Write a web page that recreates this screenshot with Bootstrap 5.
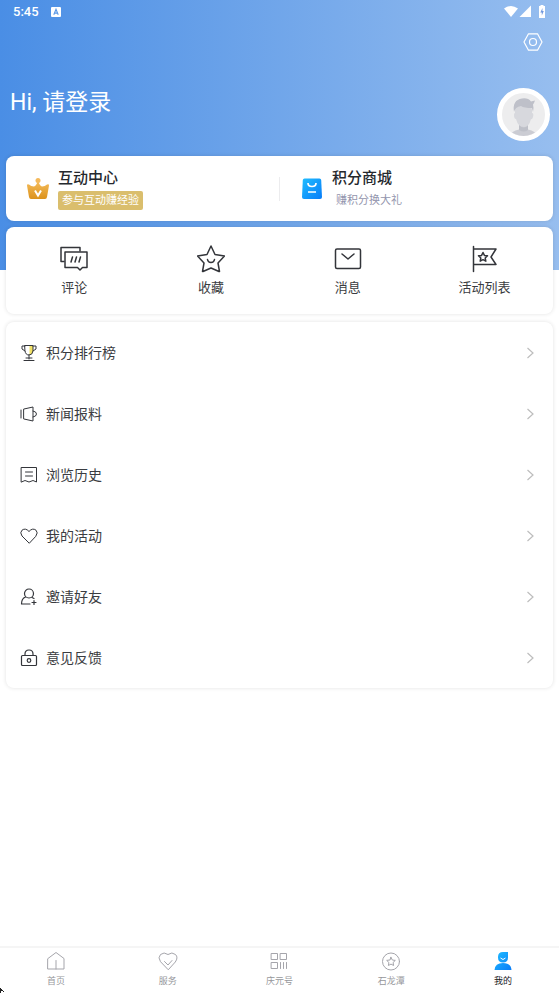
<!DOCTYPE html>
<html lang="zh-CN">
<head>
<meta charset="utf-8">
<meta name="viewport" content="width=device-width, initial-scale=1">
<title>我的</title>
<link href="https://cdn.jsdelivr.net/npm/bootstrap@5.3.0/dist/css/bootstrap.min.css" rel="stylesheet">
<style>
body { font-family: Roboto, "Noto Sans CJK SC", sans-serif; color: #3a3c41; background: #fff; }
svg { display: block; flex: none; }
a { color: inherit; text-decoration: none; }
.screen { background: linear-gradient(90deg, #4a8ee5, #97beef) 0 0 / 100% 270px no-repeat; }
.status { height: 24px; padding: 0 13px; font-size: 13px; font-weight: 500; line-height: 24px; }
.settings-row { height: 36px; padding-right: 16px; }
.profile { height: 96px; padding: 28px 9px 0 10px; }
.greeting { font-size: 23px; line-height: 30px; }
.avatar { width: 53px; height: 53px; border: 5px solid #fff; background: #ededee; overflow: hidden; }
.content { padding: 0 6px; }
.panel { border-radius: 8px; background: #fff; box-shadow: 0 0 4px rgba(0, 0, 0, .12); }
.promo { height: 65px; }
.promo a { padding-left: 20px; gap: 8px; }
.promo-text { gap: 2px; }
.promo-title { font-size: 15px; line-height: 22px; font-weight: 500; color: #25282d; }
.promo-note { font-size: 11px; line-height: 19px; padding: 0 4px; border-radius: 2px; color: #9395ad; }
.promo-note.gold { background: #dabe6d; color: #fff; }
.rule { width: 1px; height: 24px; background: #ececee; }
.quick { height: 87px; padding-top: 18px; margin-top: 6px; }
.quick a { font-size: 13px; line-height: 20px; gap: 5px; }
.entry { height: 61px; padding: 0 18px 0 14px; gap: 8px; }
.entry-text { font-size: 14px; line-height: 20px; }
.tabs { height: 47px; border-top: 2px solid #f5f5f5; padding-top: 3px; background: #fff; }
.tabs a { font-size: 9px; line-height: 16px; color: #96979b; gap: 2px; }
.tabs a.active { color: #17191d; }
.pointer { left: 0; bottom: 0; }
.ink { fill: none; stroke: #33353a; stroke-linejoin: round; stroke-linecap: round; }
.grey { fill: none; stroke: #a5a5ab; stroke-linejoin: round; stroke-linecap: round; }
.chevron { fill: none; stroke: #bdbdbd; stroke-width: 1.2; }
</style>
<script src="https://cdn.jsdelivr.net/npm/bootstrap@5.3.0/dist/js/bootstrap.bundle.min.js"></script>
</head>
<body>
<div class="screen min-vh-100 d-flex flex-column">
  <header class="text-white">
    <div class="status d-flex align-items-center justify-content-between">
      <div class="d-flex align-items-center gap-2">
        <span>5:45</span>
        <svg class="ms-1" width="10" height="10" viewBox="0 0 9 9"><rect width="9" height="9" rx="1" fill="#fff"/><path d="M2.500 7 4.500 2 6.500 7M3.200 5.500h2.600" fill="none" stroke="#5b98e6"/></svg>
      </div>
      <svg width="42" height="14" viewBox="0 0 42 14" fill="#fff"><path d="M0 3.500Q7-1.500 14 3.500L7 12Z"/><path d="M27 .500V12H15.500Z"/><path d="M36.500 1V0h3v1h1.500v12h-6V1Z"/><path d="M38.500 3 36.300 7.500h1.500v3l2-4.500h-1.400Z" fill="#7198dd"/></svg>
    </div>
    <div class="settings-row d-flex align-items-center justify-content-end">
      <button type="button" class="btn p-0 border-0" aria-label="设置">
        <svg width="20" height="20" viewBox="0 0 20 20" fill="none" stroke="#fff" stroke-width="1.200" stroke-linejoin="round"><path d="M5.500 1.800h9L19 10l-4.500 8.200h-9L1 10Z"/><circle cx="10" cy="10" r="3.500"/></svg>
      </button>
    </div>
    <div class="profile d-flex align-items-start justify-content-between">
      <a href="#" class="greeting">Hi, 请登录</a>
      <a href="#" class="avatar rounded-circle" aria-label="头像">
        <svg width="43" height="43" viewBox="0 0 43 43"><path d="M8 43Q9 38 17 36.500V30h9v6.500Q34 38 35 43Z" fill="#cbccd3"/><path d="M17 32q5 5 9 0v5q-4 3-9 0Z" fill="#bec0c8"/><path d="M13 15Q13 9 21 9t9 8v3q2 0 1 4-1 3-2 2-2 8-7 8-6 0-8-8-2 0-2-4 0-2 1-2Z" fill="#d7d8dd"/><path d="M12 19Q10 7 20 5.500q6-1 9 3l4-1q-1 3-2 4 1 3 0 7.500l-1-4q-8 0-11-2-6 1-7 6Z" fill="#bec0c9"/></svg>
      </a>
    </div>
  </header>
  <main class="content flex-grow-1">
    <section class="panel promo d-flex align-items-center">
      <a href="#" class="d-flex align-items-center flex-fill w-50">
        <svg width="24" height="24" viewBox="0 0 24 24"><defs><linearGradient id="gold" x2="0" y2="1"><stop stop-color="#f5bd5c"/><stop offset="1" stop-color="#dc921c"/></linearGradient></defs><circle cx="12" cy="3.500" r="2.500" fill="#f4b95b"/><path d="M12 4Q14 9 16 9.500 19 9.500 21 7.500q2-1 2 1L21 20q-.3 2-2 2H5q-1.700 0-2-2L1 8.500q0-2 2-1Q5 9.500 8 9.500 10 9 12 4Z" fill="url(#gold)"/><path d="m9 13.500 3 5 3-5" fill="none" stroke="#fff" stroke-width="2"/></svg>
        <span class="promo-text d-flex flex-column align-items-start"><span class="promo-title">互动中心</span><span class="promo-note gold">参与互动赚经验</span></span>
      </a>
      <span class="rule"></span>
      <a href="#" class="d-flex align-items-center flex-fill w-50">
        <svg width="24" height="24" viewBox="0 0 24 24"><defs><linearGradient id="blue" x2="1" y2="1"><stop stop-color="#20bdff"/><stop offset="1" stop-color="#087cf8"/></linearGradient></defs><path d="M4.500 1.500h15q1.500 0 1.700 1.500L22 20q0 2-2 2H4q-2 0-2-2L2.800 3Q3 1.500 4.500 1.500Z" fill="url(#blue)"/><path d="M8 6q0 3.500 4 3.500T16 6M8 15h8" fill="none" stroke="#fff" stroke-width="1.700"/></svg>
        <span class="promo-text d-flex flex-column align-items-start"><span class="promo-title">积分商城</span><span class="promo-note">赚积分换大礼</span></span>
      </a>
    </section>
    <nav class="panel quick row row-cols-4 g-0" aria-label="快捷入口">
      <a href="#" class="col d-flex flex-column align-items-center">
        <svg class="ink" width="28" height="28" viewBox="0 0 28 28" stroke-width="1.500"><path d="M4 16.500H1V2.500h19V6"/><path d="M5 7h22v15.500h-4.500L20 25l-2.500-2.500H5Z"/><path d="m12.500 12-1.500 5m5.500-5L15 17m5.500-5L19 17"/></svg>评论</a>
      <a href="#" class="col d-flex flex-column align-items-center">
        <svg class="ink" width="28" height="28" viewBox="0 0 28 28" stroke-width="1.500"><path d="m14 1 4 8.500 9.500 1.500-6.500 7 1.500 8.500H22L14 23l-8 3.500H5.500L7 18 .5 11 10 9.500Z"/><path d="M10.500 14.500q.5 3 3.500 3t3.500-3"/></svg>收藏</a>
      <a href="#" class="col d-flex flex-column align-items-center">
        <svg class="ink" width="28" height="28" viewBox="0 0 28 28" stroke-width="1.500"><rect x="1.500" y="4" width="25" height="19.500" rx="1.500"/><path d="m8 9 6 5 6-5"/></svg>消息</a>
      <a href="#" class="col d-flex flex-column align-items-center">
        <svg class="ink" width="28" height="28" viewBox="0 0 28 28" stroke-width="1.500"><path d="M2.500 1.500v25M2.500 4h22.500l-5 8 5 7.500H2.500"/><path d="m12 7.500 1.400 2.900 3.100.4-2.300 2.200.6 3.200-2.800-1.500-2.800 1.500.6-3.200-2.300-2.200 3.100-.4Z"/></svg>活动列表</a>
    </nav>
    <nav class="panel mt-2" aria-label="菜单">
      <a href="#" class="entry d-flex align-items-center">
        <svg class="ink" width="18" height="18" viewBox="0 0 18 18"><path d="M9.500 2H13v5q-1 4-3.500 4Z" fill="#f1e165" stroke="none"/><path d="M5 1.500h8V7q-.5 4-4 4T5 7ZM5 2H2v3l3 2M13 2h3v3l-3 2M9 11v4M6 14h6M4 16.500h10"/></svg><span class="entry-text flex-grow-1">积分排行榜</span><svg class="chevron" width="9" height="12" viewBox="0 0 9 12"><path d="m1.500 1 5.500 5-5.500 5"/></svg></a>
      <a href="#" class="entry d-flex align-items-center">
        <svg class="ink" width="18" height="18" viewBox="0 0 18 18"><path d="M1 5v8M4 4 13 2v14l-9-2ZM13 6q3.500.5 3.500 3T13 12"/></svg><span class="entry-text flex-grow-1">新闻报料</span><svg class="chevron" width="9" height="12" viewBox="0 0 9 12"><path d="m1.500 1 5.500 5-5.500 5"/></svg></a>
      <a href="#" class="entry d-flex align-items-center">
        <svg class="ink" width="18" height="18" viewBox="0 0 18 18"><path d="M1.500 1.500h15v14.500L13 14.500l-4 1.500-4-1.500L1.500 16ZM5.500 6h7M5.500 10h7"/></svg><span class="entry-text flex-grow-1">浏览历史</span><svg class="chevron" width="9" height="12" viewBox="0 0 9 12"><path d="m1.500 1 5.500 5-5.500 5"/></svg></a>
      <a href="#" class="entry d-flex align-items-center">
        <svg class="ink" width="18" height="18" viewBox="0 0 18 18"><path d="M9 16 2 9Q-.5 5.500 2 3.200 5.500.5 9 4.500q3.500-4 7-1.300 2.500 2.300 0 5.800Z"/></svg><span class="entry-text flex-grow-1">我的活动</span><svg class="chevron" width="9" height="12" viewBox="0 0 9 12"><path d="m1.500 1 5.500 5-5.500 5"/></svg></a>
      <a href="#" class="entry d-flex align-items-center">
        <svg class="ink" width="18" height="18" viewBox="0 0 18 18" stroke-width="1.200"><circle cx="9" cy="5.500" r="4.500"/><path d="M5.500 9Q1.500 10.500 1.500 16H10M12 9.500l2 1M14 12.500v4M12 14.500h4"/></svg><span class="entry-text flex-grow-1">邀请好友</span><svg class="chevron" width="9" height="12" viewBox="0 0 9 12"><path d="m1.500 1 5.500 5-5.500 5"/></svg></a>
      <a href="#" class="entry d-flex align-items-center">
        <svg class="ink" width="18" height="18" viewBox="0 0 18 18" stroke-width="1.200"><rect x="1.500" y="6.500" width="15" height="10" rx="1"/><path d="M5 6.500V5q0-4 4-4t4 4v1.500"/><circle cx="9" cy="11.500" r="1.800"/></svg><span class="entry-text flex-grow-1">意见反馈</span><svg class="chevron" width="9" height="12" viewBox="0 0 9 12"><path d="m1.500 1 5.500 5-5.500 5"/></svg></a>
    </nav>
  </main>
  <footer class="sticky-bottom">
    <nav class="tabs row row-cols-5 g-0" aria-label="底部导航">
      <a href="#" class="col d-flex flex-column align-items-center"><svg class="grey" width="20" height="20" viewBox="0 0 20 20"><path d="M2 7.500 10 1.500l8 6v10.500H2ZM10 9.500V18"/></svg>首页</a>
      <a href="#" class="col d-flex flex-column align-items-center"><svg class="grey" width="20" height="20" viewBox="0 0 20 20"><path d="m10 18.500-7.500-7.800Q-.5 6.500 2.500 3.500q3.500-3 7.500 0 4-3 7.500 0 3 3 0 7.200ZM6.500 10.500l3.500 3.500 4-4.500"/></svg>服务</a>
      <a href="#" class="col d-flex flex-column align-items-center"><svg class="grey" width="20" height="20" viewBox="0 0 20 20"><path d="M2.500 2.500h6v6h-6ZM11.500 2.500h6v6h-6ZM2.500 11.500h6v6h-6ZM11.500 11.500v6M14.500 11.500v6M17.500 11.500v6"/></svg>庆元号</a>
      <a href="#" class="col d-flex flex-column align-items-center"><svg class="grey" width="20" height="20" viewBox="0 0 20 20"><circle cx="10" cy="10.500" r="8.500"/><path d="m10 6.300 1.300 2.700 3 .4-2.200 2.100.5 3-2.600-1.400-2.600 1.400.5-3-2.200-2.100 3-.4Z"/></svg>石龙潭</a>
      <a href="#" class="active col d-flex flex-column align-items-center" aria-current="page"><svg width="20" height="20" viewBox="0 0 20 20"><path d="M5 6Q5 1 10 1h5v5.500q0 5-5 5t-5-5ZM1.500 19q.5-7 8.500-7t8.500 7Z" fill="url(#blue)"/><path d="M7.500 7q2.500 3 5 0" fill="none" stroke="#fff"/></svg>我的</a>
    </nav>
    <svg class="pointer position-absolute" width="5" height="5" viewBox="0 0 5 5" aria-hidden="true"><path d="M0 0h1v1h1v1h1v1h1v1H3V3H1v2H0Z" fill="#222"/></svg>
  </footer>
</div>
</body>
</html>
